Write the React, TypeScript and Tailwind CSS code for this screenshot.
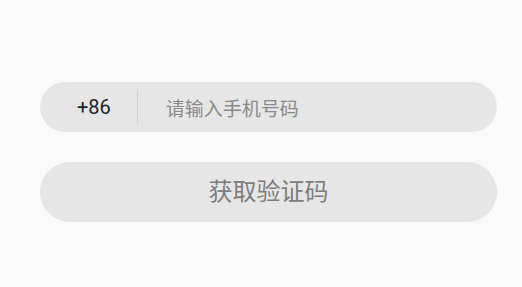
export default function App() {
  return (
    <div className="min-h-[287px] w-[522px] bg-[#fafafa] pt-[82px] font-['Roboto','Noto_Sans_CJK_SC',sans-serif]">
      <PhoneInput />
      <button
        type="button"
        className="ml-[40px] mt-[30px] flex h-[60px] w-[457px] items-center justify-center rounded-full bg-[#e6e6e6] text-[24px] leading-none text-[#7d7d7d]"
      >
        获取验证码
      </button>
    </div>
  );
}

function PhoneInput() {
  return (
    <div className="ml-[40px] flex h-[50px] w-[457px] items-center rounded-full bg-[#e6e6e6]">
      <span className="pl-[37px] text-[20px] leading-none text-[#222]">+86</span>
      <span className="ml-[26px] h-[35px] w-px bg-[#d2d2d2]" />
      <span className="ml-[28px] text-[19px] leading-none text-[#8a8a8a] font-['Noto_Sans_CJK_SC',sans-serif]">
        请输入手机号码
      </span>
    </div>
  );
}
